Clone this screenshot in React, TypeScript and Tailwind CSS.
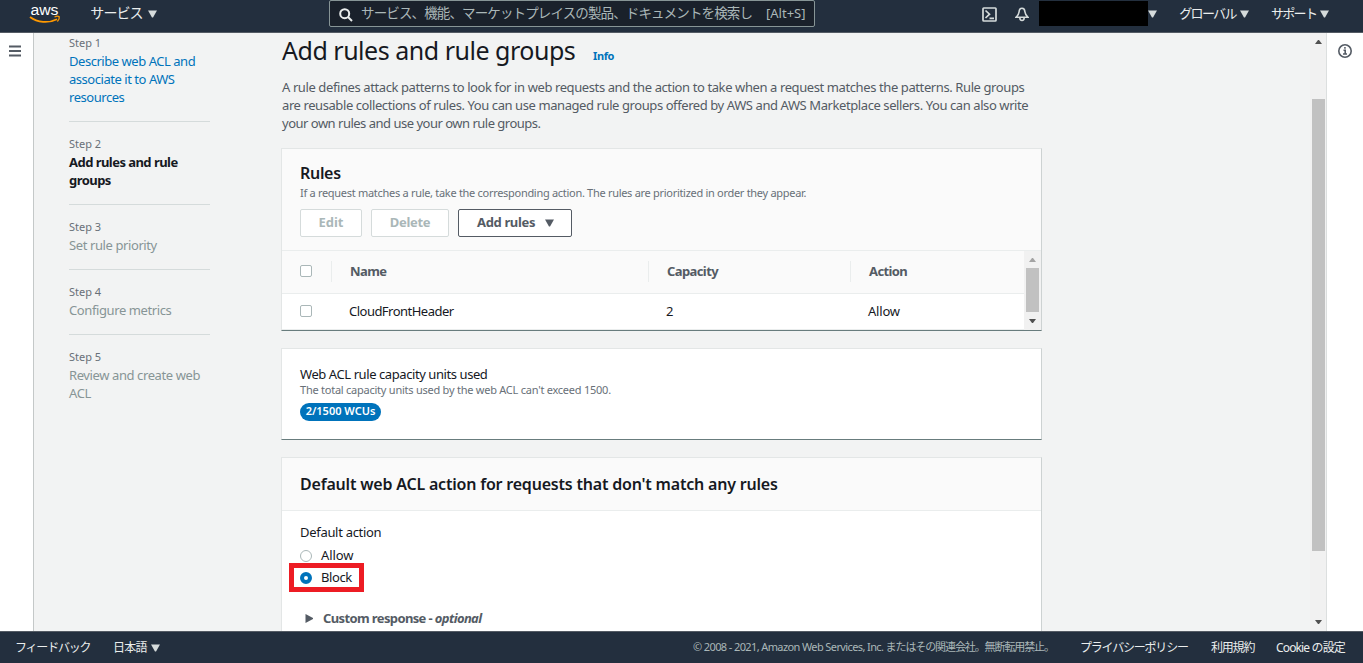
import React from "react";

const steps = [
  { label: "Step 1", lines: ["Describe web ACL and", "associate it to AWS", "resources"], state: "done" },
  { label: "Step 2", lines: ["Add rules and rule", "groups"], state: "current" },
  { label: "Step 3", lines: ["Set rule priority"], state: "todo" },
  { label: "Step 4", lines: ["Configure metrics"], state: "todo" },
  { label: "Step 5", lines: ["Review and create web", "ACL"], state: "todo" },
];

const stepStyles: Record<string, string> = {
  done: "text-[#0073bb] tracking-[-0.46px]",
  current: "text-[#16191f] font-bold tracking-[-0.54px]",
  todo: "text-[#879596] tracking-[-0.4px]",
};

const Caret = ({ className = "" }: { className?: string }) => (
  <svg className={`w-[9px] h-2 shrink-0 ${className}`} viewBox="0 0 9 8" fill="currentColor">
    <path d="M0 0.5h9L5 7.5H4z" />
  </svg>
);

const ScrollArrow = ({ up = false, className = "" }: { up?: boolean; className?: string }) => (
  <svg className={`w-[7px] h-1 shrink-0 ${className}`} viewBox="0 0 7 4" fill="currentColor">
    <path d={up ? "M0 4h7L4 0H3z" : "M0 0h7L4 4H3z"} />
  </svg>
);

const AwsLogo = () => (
  <svg className="w-8 h-6 shrink-0 overflow-visible" viewBox="0 0 32 24">
    <text x="1.5" y="13.5" fontFamily="Liberation Sans" fontSize="15.5" textLength="28" lengthAdjust="spacingAndGlyphs" fill="#fff">aws</text>
    <path d="M1 16c7.500 5.800 18.500 6.500 27 2.200" fill="none" stroke="#f90" strokeWidth="1.8" />
    <path d="M25.500 16c1.800-.8 4-.8 4.700-.3.300 1.200-.4 3.500-1.800 4.800" fill="none" stroke="#f90" strokeWidth="1.300" />
  </svg>
);

const TopNav = () => (
  <header className="flex h-[33px] shrink-0 items-start border-b border-[#545b64] bg-[#232f3e] text-white">
    <div className="ml-[29px] mt-px">
      <AwsLogo />
    </div>
    <button className="ml-[29px] flex h-[27px] items-center gap-[5px] text-sm tracking-[-0.9px] text-[#eaeded]">
      <span className="-mt-px w-[53px] whitespace-nowrap">サービス</span>
      <Caret className="mt-px text-[#d5dbdb]" />
    </button>
    <div className="ml-[172px] flex h-[27px] w-[486px] items-center rounded-[2px] border border-[#879596] bg-[#1a212b] pl-[9px] text-[#aab7b8]">
      <svg className="mt-[3px] h-[14px] w-[14px] shrink-0" viewBox="0 0 14 14" fill="none" stroke="#eaeded" strokeWidth="2">
        <circle cx="5.700" cy="5.700" r="4.500" />
        <path d="M9 9l4 4" />
      </svg>
      <span className="ml-2 w-[396px] whitespace-nowrap pb-px text-[13.5px] leading-5 tracking-[-0.87px]">サービス、機能、マーケットプレイスの製品、ドキュメントを検索し</span>
      <span className="ml-[9px] whitespace-nowrap pb-px text-[13px] leading-5">[Alt+S]</span>
    </div>
    <svg className="ml-[167px] mt-[7px] h-[15px] w-[15px] shrink-0" viewBox="0 0 15 15" fill="none" stroke="#d5dbdb" strokeWidth="1.700">
      <rect x="1" y="1" width="13" height="13" rx="0.8" />
      <path d="M3.500 3.500L7.500 7.200l-4 3.800M7.500 11.300H12" />
    </svg>
    <svg className="ml-[18px] mt-[7px] h-[15px] w-[14px] shrink-0" viewBox="0 0 14 15" fill="none" stroke="#d5dbdb" strokeWidth="1.600">
      <path d="M7 1.200c-2 0-2.800 1.500-2.900 3.600C4 7.300 3 8.300 1 10.300h12c-2-2-3-3-3.100-5.500C9.800 2.700 9 1.200 7 1.200z" />
      <path d="M4.800 10.500c0 4 4.400 4 4.400 0" />
    </svg>
    <div className="ml-[10px] mt-px h-[25px] w-[109px] bg-black" />
    <Caret className="mt-[10px] text-[#d5dbdb]" />
    <button className="ml-[22px] flex h-[27px] items-center gap-[4px] text-[13px] tracking-[-1.700px] text-[#eaeded]">
      <span className="w-[57px] whitespace-nowrap">グローバル</span>
      <Caret className="mt-px text-[#d5dbdb]" />
    </button>
    <button className="ml-[22px] flex h-[27px] items-center gap-[5px] text-[13px] tracking-[-1.700px] text-[#eaeded]">
      <span className="w-[45px] whitespace-nowrap">サポート</span>
      <Caret className="-ml-px mt-px text-[#d5dbdb]" />
    </button>
  </header>
);

const StepList = () => (
  <nav className="ml-[35px] mt-px w-[141px] shrink-0">
    {steps.map((step, i) => (
      <div key={step.label} className={i < steps.length - 1 ? "mb-[13px] border-b border-[#d5dbdb] pb-[15px]" : ""}>
        <div className="text-[11px] leading-[18px] text-[#687078]">{step.label}</div>
        {step.lines.map((line) => (
          <div key={line} className={`whitespace-nowrap text-[13px] leading-[18px] ${stepStyles[step.state]}`}>
            {line}
          </div>
        ))}
      </div>
    ))}
  </nav>
);

const Card = ({ className = "", children }: { className?: string; children: React.ReactNode }) => (
  <section className={`border border-[#e3e6e6] border-r-[#cdd2d2] border-b-[#687c7d] bg-white ${className}`}>{children}</section>
);

const Checkbox = () => <span className="-mt-px h-3 w-3 shrink-0 rounded-[2px] border border-[#aab7b8] bg-white" />;

const RulesCard = () => (
  <Card className="h-[183px]">
    <div className="h-[102px] border-b border-[#eaeded] bg-[#fafafa] px-[18px] pt-[13px]">
      <h2 className="text-base font-semibold leading-[22px] tracking-[-0.3px] text-[#16191f]">Rules</h2>
      <p className="mt-px whitespace-nowrap text-[11px] leading-4 tracking-[-0.295px] text-[#687078]">
        If a request matches a rule, take the corresponding action. The rules are prioritized in order they appear.
      </p>
      <div className="mt-2 flex gap-[9px] text-[13px] font-bold">
        <button className="h-7 w-[62px] rounded-[2px] border border-[#d5dbdb] bg-white text-[#aab7b8]">Edit</button>
        <button className="h-7 w-[78px] rounded-[2px] border border-[#d5dbdb] bg-white tracking-[-0.3px] text-[#aab7b8]">Delete</button>
        <button className="flex h-7 w-[114px] items-center rounded-[2px] border border-[#545b64] bg-white pl-[18px] text-[#545b64]">
          <span className="w-[68px] whitespace-nowrap text-left tracking-[-0.35px]">Add rules</span>
          <Caret />
        </button>
      </div>
    </div>
    <div className="flex h-[79px]">
      <div className="flex-1">
        <div className="flex h-[43px] items-center border-b border-[#eaeded] bg-[#fafafa] pb-px pl-[18px] text-[13px] font-bold tracking-[-0.6px] text-[#545b64]">
          <Checkbox />
          <span className="ml-[19px] w-[317px] border-l border-[#eaeded] pb-px pl-[18px] leading-5">Name</span>
          <span className="w-[202px] border-l border-[#eaeded] pb-px pl-[18px] leading-5">Capacity</span>
          <span className="border-l border-[#eaeded] pb-px pl-[18px] leading-5">Action</span>
        </div>
        <div className="flex h-9 items-center border-b border-[#eaeded] pl-[18px] text-[13px] tracking-[-0.52px] text-[#16191f]">
          <Checkbox />
          <span className="ml-[37px] w-[317px]">CloudFrontHeader</span>
          <span className="w-[202px]">2</span>
          <span className="tracking-[-0.2px]">Allow</span>
        </div>
      </div>
      <div className="flex w-[17px] flex-col items-center bg-[#f1f1f1]">
        <ScrollArrow up className="mt-[7px] text-[#a3a3a3]" />
        <div className="mt-[6px] h-11 w-[13px] bg-[#c1c1c1]" />
        <ScrollArrow className="mt-[7px] text-[#505050]" />
      </div>
    </div>
  </Card>
);

const CapacityCard = () => (
  <Card className="mt-[17px] h-[92px] px-[18px] pt-4">
    <div className="whitespace-nowrap text-[13px] leading-[18px] tracking-[-0.42px] text-[#16191f]">Web ACL rule capacity units used</div>
    <div className="whitespace-nowrap text-[11px] leading-[14px] tracking-[-0.24px] text-[#687078]">The total capacity units used by the web ACL can't exceed 1500.</div>
    <div className="mt-[6px] flex h-[18px] w-[81px] items-center justify-center whitespace-nowrap rounded-full bg-[#0073bb] pb-px text-[11px] font-semibold text-white">
      2/1500 WCUs
    </div>
  </Card>
);

const DefaultActionCard = () => (
  <Card className="mt-[17px] h-[240px]">
    <div className="flex h-[53px] items-center border-b border-[#eaeded] bg-[#fafafa] px-[18px] pb-px">
      <h2 className="whitespace-nowrap text-base font-semibold tracking-[-0.2px] text-[#16191f]">Default web ACL action for requests that don't match any rules</h2>
    </div>
    <div className="pl-[18px] pt-3 text-[13px] leading-[18px] tracking-[-0.3px] text-[#16191f]">
      <div>Default action</div>
      <label className="mt-[5px] flex items-center">
        <span className="mt-px h-3 w-3 rounded-full border border-[#aab7b8]" />
        <span className="ml-[9px] tracking-[-0.1px]">Allow</span>
      </label>
      <label className="relative mt-1 flex items-center">
        <span className="mt-px h-3 w-3 rounded-full border-4 border-[#0073bb]" />
        <span className="ml-[9px] tracking-[-0.4px]">Block</span>
        <span className="absolute -left-[11px] -top-[5px] h-[29px] w-[75px] border-[5px] border-[#ed1c24]" />
      </label>
      <div className="mt-[23px] flex items-center whitespace-nowrap pl-[5px] font-bold tracking-[-0.62px] text-[#545b64]">
        <svg className="mr-[10px] h-[9px] w-2" viewBox="0 0 8 9" fill="currentColor">
          <path d="M0.500 0v9L8 5V4z" />
        </svg>
        <span>
          Custom response - <i>optional</i>
        </span>
      </div>
    </div>
  </Card>
);

const Footer = () => (
  <footer className="flex h-8 shrink-0 items-center border-t border-[#545b64] bg-[#232f3e] text-[12px] tracking-[-1.2px] text-[#eaeded]">
    <span className="ml-[15px] w-[98px] whitespace-nowrap">フィードバック</span>
    <span className="w-[38px] whitespace-nowrap tracking-[-0.8px]">日本語</span>
    <Caret className="text-[#d5dbdb]" />
    <span className="ml-[533px] w-[387px] whitespace-nowrap text-[11px] tracking-[-0.610px] text-[#aab7b8]">
      © 2008 - 2021, Amazon Web Services, Inc. <span className="tracking-[-1.100px]">またはその関連会社。無断転用禁止。</span>
    </span>
    <span className="w-[131px] whitespace-nowrap">プライバシーポリシー</span>
    <span className="w-[65px] whitespace-nowrap">利用規約</span>
    <span className="whitespace-nowrap tracking-[-0.850px]">Cookie の設定</span>
  </footer>
);

const App = () => (
  <div className="flex h-[663px] w-[1363px] flex-col overflow-hidden bg-white font-['Noto_Sans','Noto_Sans_CJK_JP',sans-serif]">
    <TopNav />
    <div className="flex min-h-0 flex-1">
      <aside className="w-[34px] shrink-0 border-r border-[#c4c8c8] bg-white pl-[9px] pt-3">
        <svg className="h-3 w-3" viewBox="0 0 12 12" stroke="#545b64" strokeWidth="1.800">
          <path d="M0 1.500h12M0 6h12M0 10.500h12" />
        </svg>
      </aside>
      <main className="flex min-w-0 flex-1 overflow-hidden bg-[#f2f3f3]">
        <StepList />
        <div className="ml-[71px] w-[761px] shrink-0">
          <div className="ml-px flex h-9 items-center">
            <h1 className="w-[311px] whitespace-nowrap text-[25px] tracking-[-0.48px] text-[#16191f]">Add rules and rule groups</h1>
            <a className="mt-[11px] text-[11px] font-bold tracking-[-0.4px] text-[#0073bb]">Info</a>
          </div>
          <div className="mb-4 ml-px mt-[9px] whitespace-nowrap text-[13px] leading-[18px] tracking-[-0.4px] text-[#545b64]">
            <p>A rule defines attack patterns to look for in web requests and the action to take when a request matches the patterns. Rule groups</p>
            <p className="tracking-[-0.415px]">are reusable collections of rules. You can use managed rule groups offered by AWS and AWS Marketplace sellers. You can also write</p>
            <p className="tracking-[-0.5px]">your own rules and use your own rule groups.</p>
          </div>
          <RulesCard />
          <CapacityCard />
          <DefaultActionCard />
        </div>
      </main>
      <div className="flex w-[16px] shrink-0 flex-col items-center bg-[#f1f1f1]">
        <ScrollArrow up className="mt-[7px] text-[#505050]" />
        <div className="mt-[55px] h-[452px] w-[13px] bg-[#c1c1c1]" />
        <ScrollArrow className="mt-[69px] text-[#505050]" />
      </div>
      <aside className="w-[37px] shrink-0 border-l border-[#dcdfdf] bg-white pl-[11px] pt-[11px]">
        <svg className="h-[14px] w-[14px]" viewBox="0 0 14 14" fill="none" stroke="#545b64" strokeWidth="1.600">
          <circle cx="7" cy="7" r="6.200" />
          <path d="M5.500 6.300H7.200V10M5 10h4M6.200 3.900h1.500" />
        </svg>
      </aside>
    </div>
    <Footer />
  </div>
);

export default App;
